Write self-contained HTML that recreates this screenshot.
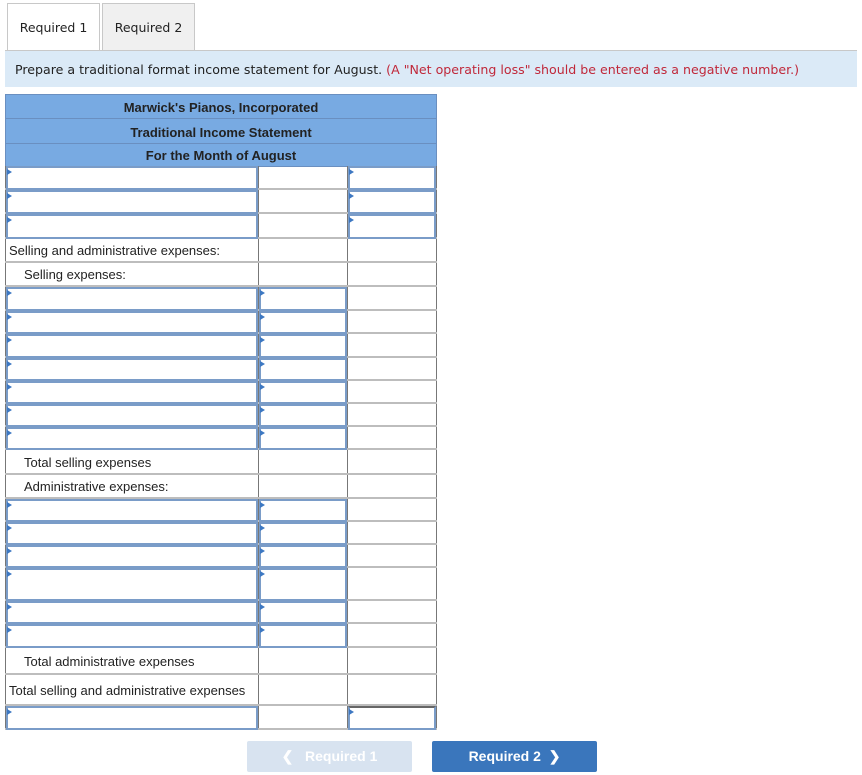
<!DOCTYPE html>
<html><head><meta charset="utf-8"><style>
*{box-sizing:border-box;margin:0;padding:0}
body{width:862px;height:775px;background:#fff;font-family:"Liberation Sans",Arial,sans-serif;position:relative;overflow:hidden}
.tab{position:absolute;top:3px;height:48px;border:1px solid #c8c8c8;border-bottom:none;font-family:"DejaVu Sans",sans-serif;font-size:12.5px;color:#222;text-align:center;line-height:48px}
.bar{position:absolute;left:5px;top:50px;width:852px;height:37px;background:#dbeaf7;border-top:1px solid #c8c8c8;font-family:"DejaVu Sans",sans-serif;font-size:12.6px;color:#222;line-height:38px;padding-left:10px;white-space:nowrap}
.bar span{color:#c0283a}
.hd{position:absolute;left:5px;width:432px;background:#78aae2;border:1px solid #6a8fc0;text-align:center;font-weight:bold;font-size:13px;color:#222}
.row{position:absolute;left:5px;width:432px;border-bottom:2px solid #bdbdbd}
.c{position:absolute;top:0;bottom:0;border-left:1px solid #777}
.c1{left:0;width:253px}.c2{left:253px;width:89px}.c3{left:342px;width:90px;border-right:1px solid #777}
.in{position:absolute;left:0;top:0;right:0;bottom:-2px;border:2px solid #7a9cc8;background:#fff}
.in::before{content:"";position:absolute;left:-1px;top:1px;border-left:5px solid #3d78c2;border-top:3px solid transparent;border-bottom:3px solid transparent}
.t{position:absolute;left:3px;font-size:13px;color:#222;white-space:nowrap}
.btn{position:absolute;top:741px;height:31px;width:165px;color:#fff;font-weight:bold;font-size:14px;text-align:center;line-height:31px;border-radius:2px}
</style></head><body>
<div class="tab" style="left:7px;width:93px;background:#fff;height:49px">Required 1</div>
<div class="tab" style="left:102px;width:93px;background:#f0f0f0">Required 2</div>
<div class="bar">Prepare a traditional format income statement for August. <span>(A "Net operating loss" should be entered as a negative number.)</span></div>

<div class="hd" style="top:94px;height:25px;line-height:25px">Marwick's Pianos, Incorporated</div>
<div class="hd" style="top:118px;height:26px;line-height:27px">Traditional Income Statement</div>
<div class="hd" style="top:143px;height:24px;line-height:24px">For the Month of August</div>

<div class="row" style="top:166px;height:24px"><div class="c c1"><div class="in"></div></div><div class="c c2"></div><div class="c c3"><div class="in"></div></div></div>
<div class="row" style="top:190px;height:24px"><div class="c c1"><div class="in"></div></div><div class="c c2"></div><div class="c c3"><div class="in"></div></div></div>
<div class="row" style="top:214px;height:25px"><div class="c c1"><div class="in"></div></div><div class="c c2"></div><div class="c c3"><div class="in"></div></div></div>
<div class="row" style="top:239px;height:24px"><div class="c c1"><span class="t" style="top:4px">Selling and administrative expenses:</span></div><div class="c c2"></div><div class="c c3"></div></div>
<div class="row" style="top:263px;height:24px"><div class="c c1"><span class="t" style="left:18px;top:4px">Selling expenses:</span></div><div class="c c2"></div><div class="c c3"></div></div>

<div class="row" style="top:287px;height:24px"><div class="c c1"><div class="in"></div></div><div class="c c2"><div class="in"></div></div><div class="c c3"></div></div>
<div class="row" style="top:311px;height:23px"><div class="c c1"><div class="in"></div></div><div class="c c2"><div class="in"></div></div><div class="c c3"></div></div>
<div class="row" style="top:334px;height:24px"><div class="c c1"><div class="in"></div></div><div class="c c2"><div class="in"></div></div><div class="c c3"></div></div>
<div class="row" style="top:358px;height:23px"><div class="c c1"><div class="in"></div></div><div class="c c2"><div class="in"></div></div><div class="c c3"></div></div>
<div class="row" style="top:381px;height:23px"><div class="c c1"><div class="in"></div></div><div class="c c2"><div class="in"></div></div><div class="c c3"></div></div>
<div class="row" style="top:404px;height:23px"><div class="c c1"><div class="in"></div></div><div class="c c2"><div class="in"></div></div><div class="c c3"></div></div>
<div class="row" style="top:427px;height:23px"><div class="c c1"><div class="in"></div></div><div class="c c2"><div class="in"></div></div><div class="c c3"></div></div>
<div class="row" style="top:450px;height:25px"><div class="c c1"><span class="t" style="left:18px;top:5px">Total selling expenses</span></div><div class="c c2"></div><div class="c c3"></div></div>
<div class="row" style="top:475px;height:24px"><div class="c c1"><span class="t" style="left:18px;top:4px">Administrative expenses:</span></div><div class="c c2"></div><div class="c c3"></div></div>

<div class="row" style="top:499px;height:23px"><div class="c c1"><div class="in"></div></div><div class="c c2"><div class="in"></div></div><div class="c c3"></div></div>
<div class="row" style="top:522px;height:23px"><div class="c c1"><div class="in"></div></div><div class="c c2"><div class="in"></div></div><div class="c c3"></div></div>
<div class="row" style="top:545px;height:23px"><div class="c c1"><div class="in"></div></div><div class="c c2"><div class="in"></div></div><div class="c c3"></div></div>
<div class="row" style="top:568px;height:33px"><div class="c c1"><div class="in"></div></div><div class="c c2"><div class="in"></div></div><div class="c c3"></div></div>
<div class="row" style="top:601px;height:23px"><div class="c c1"><div class="in"></div></div><div class="c c2"><div class="in"></div></div><div class="c c3"></div></div>
<div class="row" style="top:624px;height:24px"><div class="c c1"><div class="in"></div></div><div class="c c2"><div class="in"></div></div><div class="c c3"></div></div>
<div class="row" style="top:648px;height:27px"><div class="c c1"><span class="t" style="left:18px;top:6px">Total administrative expenses</span></div><div class="c c2"></div><div class="c c3"></div></div>
<div class="row" style="top:675px;height:31px"><div class="c c1"><span class="t" style="top:8px">Total selling and administrative expenses</span></div><div class="c c2"></div><div class="c c3"></div></div>
<div class="row" style="top:706px;height:24px"><div class="c c1"><div class="in"></div></div><div class="c c2"></div><div class="c c3"><div class="in" style="border-top-color:#666"></div></div></div>

<div class="btn" style="left:247px;background:#d8e3f0;color:#fff">&#10094;&nbsp;&nbsp; Required 1</div>
<div class="btn" style="left:432px;background:#3a76bc">Required 2 &nbsp;&#10095;</div>
</body></html>
